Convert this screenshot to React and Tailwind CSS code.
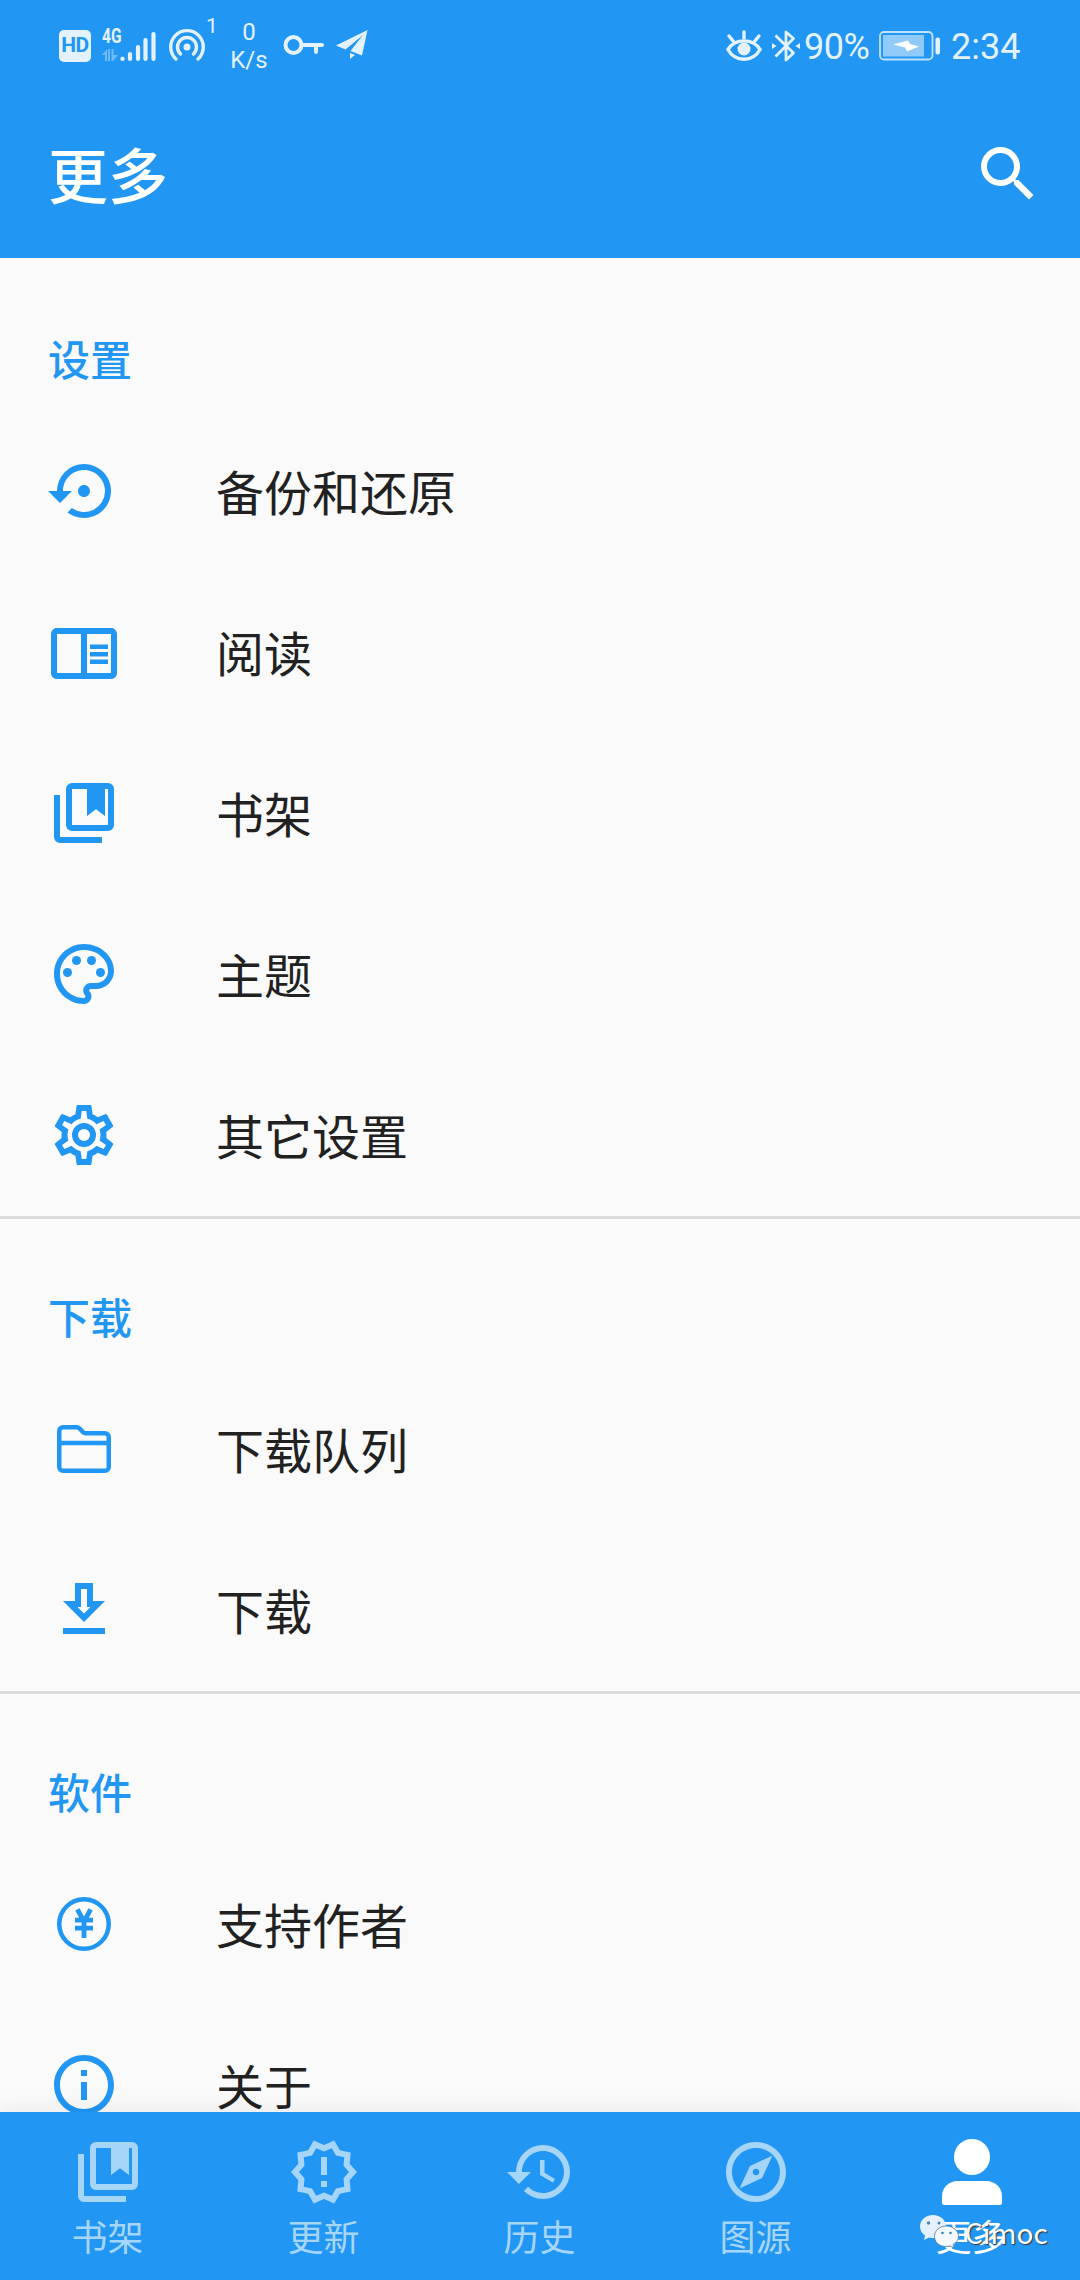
import { MdSettingsBackupRestore, MdOutlineChromeReaderMode, MdOutlinePalette, MdOutlineInfo, MdOutlineNewReleases, MdHistory, MdOutlineExplore, MdSearch } from 'react-icons/md'

const COG = 'M12,8A4,4 0 0,1 16,12A4,4 0 0,1 12,16A4,4 0 0,1 8,12A4,4 0 0,1 12,8M12,10A2,2 0 0,0 10,12A2,2 0 0,0 12,14A2,2 0 0,0 14,12A2,2 0 0,0 12,10M10,22C9.75,22 9.54,21.82 9.5,21.58L9.13,18.93C8.5,18.68 7.96,18.34 7.44,17.94L4.95,18.95C4.73,19.03 4.46,18.95 4.34,18.73L2.34,15.27C2.21,15.05 2.27,14.78 2.46,14.63L4.57,12.97L4.5,12L4.57,11L2.46,9.37C2.27,9.22 2.21,8.95 2.34,8.73L4.34,5.27C4.46,5.05 4.73,4.96 4.95,5.05L7.44,6.05C7.96,5.66 8.5,5.32 9.13,5.07L9.5,2.42C9.54,2.18 9.75,2 10,2H14C14.25,2 14.46,2.18 14.5,2.42L14.87,5.07C15.5,5.32 16.04,5.66 16.56,6.05L19.05,5.05C19.27,4.96 19.54,5.05 19.66,5.27L21.66,8.73C21.79,8.95 21.73,9.22 21.54,9.37L19.43,11L19.5,12L19.43,13L21.54,14.63C21.73,14.78 21.79,15.05 21.66,15.27L19.66,18.73C19.54,18.95 19.27,19.04 19.05,18.95L16.56,17.95C16.04,18.34 15.5,18.68 14.87,18.93L14.5,21.58C14.46,21.82 14.25,22 14,22H10M11.25,4L10.88,6.61C9.68,6.86 8.62,7.5 7.85,8.39L5.44,7.35L4.69,8.65L6.8,10.2C6.4,11.37 6.4,12.64 6.8,13.8L4.68,15.36L5.43,16.66L7.86,15.62C8.63,16.5 9.68,17.14 10.87,17.38L11.24,20H12.76L13.13,17.39C14.32,17.14 15.37,16.5 16.14,15.62L18.57,16.66L19.32,15.36L17.2,13.81C17.6,12.64 17.6,11.37 17.2,10.2L19.31,8.65L18.56,7.35L16.15,8.39C15.38,7.5 14.32,6.86 13.12,6.62L12.75,4H11.25Z'

const svg = (children) => ({ className }) => (
  <svg viewBox="0 0 24 24" fill="currentColor" className={className}>{children}</svg>
)

const Cog = svg(<path d={COG} />)
const Download = svg(<path d="M13,5V11H14.17L12,13.17L9.83,11H11V5H13M15,3H9V9H5L12,16L19,9H15V3M19,18H5V20H19V18Z" />)
const Bookmarks = svg(
  <>
    <path d="M4 6H2V20A2 2 0 0 0 4 22H18V20H4Z" />
    <rect x="7" y="3" width="14" height="14" rx="1" fill="none" stroke="currentColor" strokeWidth="2" />
    <path d="M13 3.500H19V13L16 10.750L13 13Z" />
  </>
)
const Folder = svg(
  <path d="M3.75 6A1.25 1.25 0 0 1 5 4.75H9.6C10.9 4.75 11.2 6.75 12.6 6.75H19A1.25 1.25 0 0 1 20.25 8V18A1.25 1.25 0 0 1 19 19.25H5A1.25 1.25 0 0 1 3.75 18ZM3.75 10H20.25" fill="none" stroke="currentColor" strokeWidth="1.5" />
)
const Yen = svg(
  <>
    <circle cx="12" cy="12" r="8.250" fill="none" stroke="currentColor" strokeWidth="1.5" />
    <path d="M9.8 7.1L12 11.2L14.2 7.1M12 11V16.7M9 10.7H15M9 13.4H15" fill="none" stroke="currentColor" strokeWidth="1.6" />
  </>
)
const Person = svg(
  <>
    <circle cx="12" cy="7" r="6" />
    <path d="M2 20C2 17.2 4.4 15 7.2 15H16.8C19.6 15 22 17.2 22 20V22.3A.7 .7 0 0 1 21.3 23H2.7A.7 .7 0 0 1 2 22.3Z" />
  </>
)

const SECTIONS = [
  { title: '设置', items: [['备份和还原', MdSettingsBackupRestore], ['阅读', MdOutlineChromeReaderMode], ['书架', Bookmarks], ['主题', MdOutlinePalette], ['其它设置', Cog]] },
  { title: '下载', items: [['下载队列', Folder], ['下载', Download]] },
  { title: '软件', items: [['支持作者', Yen], ['关于', MdOutlineInfo]] },
]

const NAV = [['书架', Bookmarks], ['更新', MdOutlineNewReleases], ['历史', MdHistory], ['图源', MdOutlineExplore], ['更多', Person]]

function StatusBar() {
  return (
    <div className="flex h-[90px] items-center text-[#e3f2fd] font-[Roboto,sans-serif]">
      <div className="ml-[59px] mt-px flex h-8 w-8 items-center justify-center rounded-[5px] bg-[#e3f2fd] text-[21px] font-bold leading-none tracking-[-0.5px] text-[#2196f3]">HD</div>
      <div className="relative ml-[11px] h-[36px] w-[54px]">
        <span className="absolute left-0 top-0 origin-left scale-x-[0.74] text-[21px] font-bold leading-[18px]">4G</span>
        <svg viewBox="0 0 54 36" className="absolute inset-0 h-full w-full">
          <g opacity=".4" fill="currentColor"><path d="M0 28L5 22V34H3V28ZM6 22H8V34H6ZM9.500 22H11.500V28H16L11 34H9.500Z" /></g>
          <path d="M20.500 31.500V32M28 27V32M36 20V32M43.500 13V32M51.500 7V32" stroke="currentColor" strokeWidth="4.200" strokeLinecap="round" />
        </svg>
      </div>
      <svg viewBox="0 0 38 36" className="ml-3 h-9 w-[38px]" fill="none" stroke="currentColor" strokeWidth="3.400" strokeLinecap="round">
        <path d="M8 32A16.300 16.300 0 1 1 30 32" />
        <path d="M12.500 27A9.500 9.500 0 1 1 25.500 27" />
        <circle cx="19" cy="20" r="3.500" fill="currentColor" stroke="none" />
      </svg>
      <span className="mb-[37px] w-[12px] text-[21px] leading-none">1</span>
      <div className="ml-[9px] mt-0.5 flex w-[44px] flex-col items-center text-[24px] leading-7">
        <span>0</span>
        <span>K/s</span>
      </div>
      <svg viewBox="0 0 42 24" className="ml-3 h-6 w-[42px]" fill="none" stroke="currentColor" strokeWidth="4" strokeLinecap="round" strokeLinejoin="round">
        <circle cx="10.500" cy="12" r="8" />
        <path d="M19 12H39M33 12V19" />
      </svg>
      <svg viewBox="0 0 32 30" className="ml-[11px] h-[30px] w-8" fill="currentColor">
        <path d="M31.500 0L0 15.500L9.500 19.500L27 5L14.500 21L26 25.500ZM14 23V29L19 25Z" />
      </svg>
      <svg viewBox="0 0 36 32" className="ml-auto mt-0.5 h-8 w-9" fill="none" stroke="currentColor" strokeWidth="3.400" strokeLinecap="round">
        <path d="M2 19.500C9 8 27 8 34 19.500C27 32.500 9 32.500 2 19.500Z" />
        <path d="M18 2V8M3 6L7.500 11.500M33 6L28.500 11.500" />
        <circle cx="18" cy="19" r="6.500" fill="currentColor" stroke="none" />
      </svg>
      <svg viewBox="0 0 28 36" className="ml-2.5 mt-0.5 h-9 w-7" fill="none" stroke="currentColor" strokeWidth="2.800">
        <path d="M3.500 7.500L21.500 25L14 32V4L21.500 10.500L3.500 28.500" strokeLinejoin="round" />
        <path d="M0 15L4.500 18L0 21ZM28 15L23.500 18L28 21Z" fill="currentColor" stroke="none" />
      </svg>
      <span className="ml-1 mt-[3px] w-[68px] whitespace-nowrap text-[36px] leading-none tracking-[-0.5px]">90%</span>
      <svg viewBox="0 0 62 30" className="ml-[7px] mt-px h-[30px] w-[62px]">
        <rect x="1" y="1" width="52.500" height="27.500" rx="4" fill="none" stroke="#bfe2fc" strokeWidth="1.800" />
        <rect x="4" y="4" width="41" height="21.500" fill="#8fcaf9" />
        <path d="M14 13.500L29 9.500L31 13L40 15.500L28 20.500L26 16.500Z" fill="#fff" />
        <rect x="56.500" y="6.500" width="4.500" height="17" rx="2" fill="currentColor" />
      </svg>
      <span className="ml-2.5 mr-[59px] mt-[3px] w-[70px] whitespace-nowrap text-[36px] leading-none">2:34</span>
    </div>
  )
}

export default function App() {
  return (
    <div className="flex h-[2280px] w-[1080px] flex-col overflow-hidden bg-[#fafafa] font-['Noto_Sans_CJK_SC',sans-serif]">
      <header className="h-[258px] shrink-0 bg-[#2196f3]">
        <StatusBar />
        <div className="flex h-[168px] items-center justify-between pl-12 pr-9">
          <h1 className="mb-[3px] text-[60px] font-medium leading-none text-white">更多</h1>
          <MdSearch className="h-[72px] w-[72px] text-white" />
        </div>
      </header>
      <main className="min-h-0 flex-1 overflow-hidden">
        {SECTIONS.map(({ title, items }, i) => (
          <section key={title} className="pb-px">
            <div className={i ? 'h-[152px] border-t-[3px] border-[#dcdcdc] px-12 pt-[75px]' : 'h-[152px] px-12 pt-[78px]'}>
              <h2 className="text-[42px] font-medium leading-[44px] text-[#2196f3]">{title}</h2>
            </div>
            {items.map(([label, Icon]) => (
              <div key={label} className="flex h-[161px] items-center gap-24 px-12">
                <Icon className="h-[72px] w-[72px] shrink-0 text-[#2196f3]" />
                <span className="mb-[2px] text-[48px] leading-none text-[#212121]">{label}</span>
              </div>
            ))}
          </section>
        ))}
      </main>
      <nav className="relative grid h-[168px] shrink-0 grid-cols-5 bg-[#2196f3] shadow-[0_0_24px_rgba(0,0,0,0.08)]">
        {NAV.map(([label, Icon], i) => (
          <div key={label} className={i === 4 ? 'flex flex-col items-center pt-6 text-white' : 'flex flex-col items-center pt-6 text-[#a6d5fa]'}>
            <Icon className="h-[72px] w-[72px]" />
            <span className="mr-px mt-[9px] text-[36px] leading-[36px]">{label}</span>
          </div>
        ))}
        <div className="absolute left-[919px] top-[102px] flex items-center">
          <svg viewBox="0 0 42 36" className="h-9 w-[42px]">
            <path d="M14 1C6.500 1 1 6 1 12.500C1 16.500 3 19.500 6 21.500L5 26L10 23.500C20 26 27 20 27 12.500C27 6 21.500 1 14 1Z" fill="#e4f1fd" />
            <path d="M27.500 12C20.500 12 15.500 16.500 15.500 22.500C15.500 30 23 34 31 32L35 34L34 30.500C38 28 39.500 25.500 39.500 22.500C39.500 16.500 34 12 27.500 12Z" fill="#f4f9fe" stroke="#4c7798" strokeWidth=".8" />
            <g fill="#4383b5"><circle cx="9.500" cy="9" r="1.700" /><circle cx="20" cy="9" r="1.500" /><circle cx="23.500" cy="19" r="1.300" /><circle cx="31.500" cy="19" r="1.300" /></g>
          </svg>
          <span className="ml-1 text-[28px] leading-none text-white [text-shadow:1px_1px_1px_#333]">Cimoc</span>
        </div>
      </nav>
    </div>
  )
}
